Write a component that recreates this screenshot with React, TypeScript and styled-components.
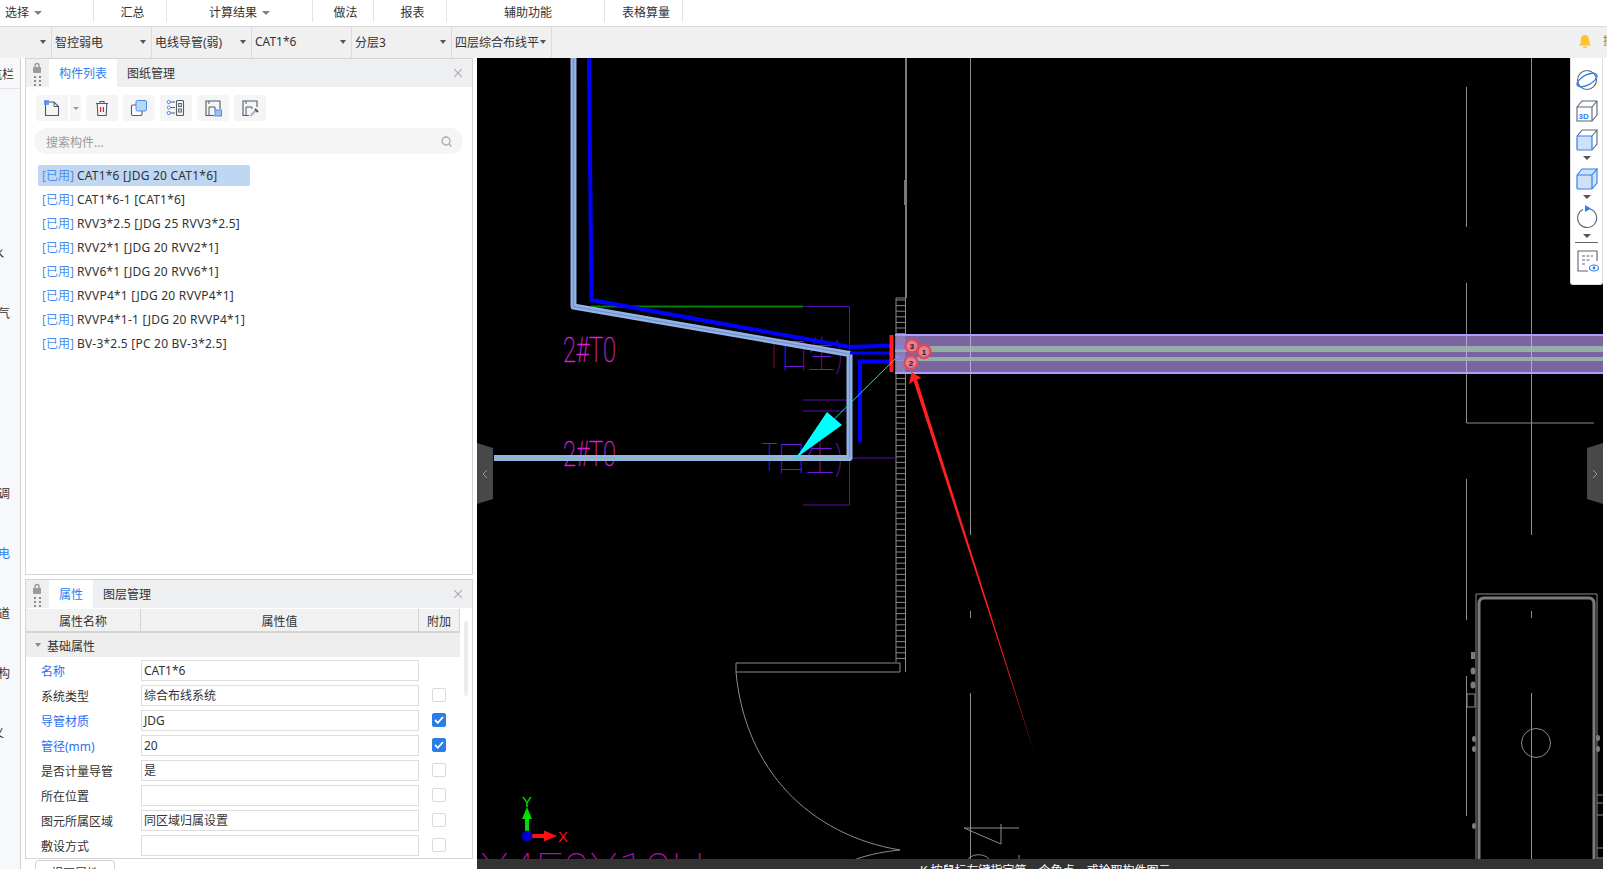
import React from 'react';
import styled, { createGlobalStyle } from 'styled-components';

const FONT = '"Noto Sans", "Noto Sans CJK SC", sans-serif';

const Global = createGlobalStyle`
  html, body { margin: 0; padding: 0; width: 100%; height: 100%; overflow: hidden; background: #fff; }
  body { font-family: ${FONT}; font-size: 12px; color: #333; }
  * { box-sizing: border-box; }
`;

const Page = styled.div`
  width: 1607px; height: 869px; display: flex; flex-direction: column; overflow: hidden; background: #fff;
`;

const MenuBar = styled.div`
  height: 27px; flex: none; display: flex; align-items: flex-start; background: #fff; border-bottom: 1px solid #d9d9d9;
`;
const MenuItem = styled.div<{ $w: number; $start?: boolean; $pad: number }>`
  width: ${p => p.$w}px; height: 22px; flex: none; display: flex; align-items: center; gap: 5px; padding: 4px 0 0 ${p => p.$pad}px;
  justify-content: ${p => (p.$start ? 'flex-start' : 'center')}; border-right: 1px solid #e3e3e3; line-height: 18px; white-space: nowrap;
`;
const MenuCaret = styled.i`
  width: 0; height: 0; border: 4px solid transparent; border-top: 4px solid #808080; border-bottom: 0; display: block;
`;

const SelectBar = styled.div`
  height: 31px; flex: none; display: flex; background: #f0f0f0; align-items: stretch;
`;
const SelectCell = styled.div<{ $w?: number }>`
  width: ${p => p.$w ?? 100}px; flex: none; display: flex; align-items: center; justify-content: space-between;
  padding: 0 5px 2px 3px; border-right: 1px solid #dcdcdc; white-space: nowrap;
`;
const SelectCaret = styled.i`
  width: 0; height: 0; border: 3px solid transparent; border-top: 4px solid #555; border-bottom: 0; display: block; flex: none;
`;
const SelectEnd = styled.div`
  flex: 1; display: flex; align-items: center; justify-content: flex-end; gap: 11px; overflow: hidden;
`;
const Bell = styled.svg`
  width: 14px; height: 15px; flex: none; margin-bottom: 3px;
`;
const CutChar = styled.span`
  color: #8a7a50; width: 4px; overflow: hidden; white-space: nowrap; font-size: 11px; line-height: 14px; margin-bottom: 3px;
`;

const Body = styled.div`
  flex: 1; display: flex; min-height: 0;
`;

const Rail = styled.div`
  width: 21px; flex: none; background: #f6f8fb; border-right: 1px solid #d2d2d2; overflow: hidden;
  display: flex; flex-direction: column; padding-top: 1px;
`;
const RailHead = styled.div`
  height: 30px; margin-bottom: 14px; flex: none; display: flex; justify-content: flex-end; align-items: center;
  padding-right: 6px; white-space: nowrap; border-bottom: 1px solid #e2e2e2; overflow: hidden;
`;
const RailRow = styled.div<{ $end: number; $on?: boolean }>`
  height: 60px; flex: none; display: flex; justify-content: flex-end; align-items: center; white-space: nowrap;
  padding-right: ${p => p.$end}px; color: ${p => (p.$on ? '#2d7fef' : '#333')};
`;

const Side = styled.div`
  width: 448px; margin-left: 4px; margin-right: 4px; flex: none; display: flex; flex-direction: column; gap: 4px; overflow: hidden;
`;
const Panel = styled.section<{ $h: number }>`
  height: ${p => p.$h}px; flex: none; border: 1px solid #d4d4d4; background: #fff; display: flex; flex-direction: column; overflow: hidden;
`;
const PanelHead = styled.header`
  height: 28px; flex: none; background: #eeeff1; display: flex; align-items: stretch; position: relative; padding-left: 23px;
`;
const Grip = styled.svg`
  position: absolute; left: 6px; top: 3px; width: 10px; height: 24px;
`;
const Tab = styled.div<{ $on?: boolean; $w: number }>`
  width: ${p => p.$w}px; flex: none; display: flex; align-items: center; justify-content: center; padding-bottom: 1px;
  background: ${p => (p.$on ? '#fff' : 'transparent')}; color: ${p => (p.$on ? '#2d7fef' : '#333')};
`;
const Close = styled.svg`
  position: absolute; right: 10px; top: 10px; width: 8px; height: 8px;
`;

const Tools = styled.div`
  height: 26px; flex: none; margin: 8px 0 0 10px; display: flex; gap: 5px;
`;
const ToolBtn = styled.div<{ $split?: boolean }>`
  width: 32px; height: 26px; flex: none; border-radius: ${p => (p.$split ? '3px 0 0 3px' : '3px')}; background: #f5f5f5;
  display: flex; align-items: center; justify-content: center;
  margin-right: ${p => (p.$split ? '-4px' : '0')};
`;
const ToolDrop = styled.div`
  width: 12px; height: 26px; flex: none; background: #f5f5f5; border-left: 1px solid #fff; border-radius: 0 3px 3px 0;
  display: flex; align-items: center; justify-content: center;
`;
const DropCaret = styled.i`
  width: 0; height: 0; border: 3px solid transparent; border-top: 3px solid #999; border-bottom: 0; display: block;
`;
const ToolIcon = styled.svg`
  width: 18px; height: 18px; overflow: visible;
`;

const Search = styled.div`
  height: 26px; flex: none; margin: 7px 9px 0 8px; background: #f5f5f5; border-radius: 13px; display: flex; align-items: center;
  justify-content: space-between; padding: 1px 11px 0 12px; color: #999;
`;
const SearchIcon = styled.svg`
  width: 11px; height: 11px;
`;

const List = styled.div`
  margin: 11px 0 0 12px; display: flex; flex-direction: column;
`;
const ListRow = styled.div`
  height: 24px; display: flex; align-items: flex-start;
`;
const ListLabel = styled.div<{ $on?: boolean }>`
  height: 21px; line-height: 21px; padding: 0 4px; border-radius: 2px; white-space: nowrap;
  background: ${p => (p.$on ? '#c0d7f1' : 'transparent')};
  width: ${p => (p.$on ? '212px' : 'auto')};
`;
const Used = styled.span`
  color: #4d8ded; margin-right: 3px;
`;
const ItemName = styled.span`
  letter-spacing: .22px;
`;

const TableWrap = styled.div`
  flex: 1; min-height: 0; position: relative; overflow: hidden;
`;
const ScrollThumb = styled.div`
  position: absolute; right: 4px; top: 13px; width: 4px; height: 75px; background: #ececec; border-radius: 2px;
`;
const Head = styled.div`
  display: grid; grid-template-columns: 115px 278px 41px; width: 434px; height: 24px; background: #f1f1f1; border-bottom: 2px solid #d4d4d4; margin-top: 1px;
`;
const HeadCell = styled.div`
  display: flex; align-items: center; justify-content: center; border-right: 1px solid #d4d4d4; padding-top: 2px;
`;
const Group = styled.div`
  width: 434px; height: 24px; background: #eeeeee; display: flex; align-items: center; padding: 1px 0 0 9px; gap: 6px;
`;
const GroupCaret = styled.i`
  width: 0; height: 0; border: 3px solid transparent; border-top: 4px solid #888; border-bottom: 0; display: block; margin-top: -2px;
`;
const PropRow = styled.div`
  display: grid; grid-template-columns: 115px 278px 41px; width: 434px; height: 25px; align-items: center;
  padding-top: 1px;
`;
const PropName = styled.div<{ $blue?: boolean }>`
  padding: 1px 0 0 15px; color: ${p => (p.$blue ? '#2d6ff0' : '#333')}; white-space: nowrap;
`;
const PropValue = styled.div`
  height: 21px; border: 1px solid #dddddd; padding-left: 2px; line-height: 20px; white-space: nowrap; background: #fff;
`;
const Check = styled.div<{ $on?: boolean }>`
  width: 14px; height: 14px; margin-left: 13px; border-radius: 2px; border: 1px solid ${p => (p.$on ? '#2b7de9' : '#dadada')};
  background: ${p => (p.$on ? '#2b7de9' : '#fff')}; display: flex; align-items: center; justify-content: center;
`;
const FootBtn = styled.div`
  width: 80px; height: 24px; margin-left: 10px; margin-top: -3px; flex: none; border: 1px solid #cfcfcf; border-radius: 4px; background: #fff;
  text-align: center; line-height: 26px; color: #333;
`;

const Canvas = styled.main`
  width: 1126px; flex: none; background: #000; position: relative; overflow: hidden;
`;
const Drawing = styled.svg`
  display: block; width: 1126px; height: 811px;
`;
const Handle = styled.div<{ $right?: boolean }>`
  position: absolute; top: 385px; ${p => (p.$right ? 'right: 0;' : 'left: 0;')} width: 16px; height: 61px; background: #484848;
  clip-path: ${p => (p.$right
    ? 'polygon(0 8%, 100% 0, 100% 100%, 0 92%)'
    : 'polygon(0 0, 100% 8%, 100% 92%, 0 100%)')};
  display: flex; align-items: center; justify-content: center;
`;
const Status = styled.div`
  position: absolute; left: 0; right: 0; bottom: 0; height: 10px; background: #333333; color: #fff; overflow: hidden;
  padding-left: 443px; line-height: 24px; white-space: nowrap; font-size: 12px;
`;
const ViewBox = styled.aside`
  position: absolute; right: 0; top: 0; width: 33px; height: 227px; background: #fff; border: 1px solid #dcdcdc; border-top: 0; border-radius: 0 0 3px 3px;
  display: flex; flex-direction: column; align-items: center;
`;
const ViewIcon = styled.svg<{ $mt: number }>`
  width: 24px; height: 24px; margin-top: ${p => p.$mt}px; flex: none; overflow: visible;
`;
const ViewCaret = styled.i`
  width: 0; height: 0; border: 4px solid transparent; border-top: 4px solid #555; border-bottom: 0; display: block; margin-top: 5px; flex: none;
`;
const ViewRule = styled.div`
  width: 23px; height: 1px; background: #666; margin-top: 4px; flex: none;
`;

const menu: { t: string; w: number; caret?: boolean; start?: boolean; pad: number }[] = [
  { t: '选择', w: 94, caret: true, start: true, pad: 5 },
  { t: '汇总', w: 73, pad: 5 },
  { t: '计算结果', w: 146, caret: true, pad: 0 },
  { t: '做法', w: 61, pad: 5 },
  { t: '报表', w: 73, pad: 5 },
  { t: '辅助功能', w: 158, pad: 5 },
  { t: '表格算量', w: 78, pad: 5 },
];
const selects = ['智控弱电', '电线导管(弱)', 'CAT1*6', '分层3', '四层综合布线平'];
const items = ['CAT1*6 [JDG 20 CAT1*6]', 'CAT1*6-1 [CAT1*6]', 'RVV3*2.5 [JDG 25 RVV3*2.5]', 'RVV2*1 [JDG 20 RVV2*1]', 'RVV6*1 [JDG 20 RVV6*1]', 'RVVP4*1 [JDG 20 RVVP4*1]', 'RVVP4*1-1 [JDG 20 RVVP4*1]', 'BV-3*2.5 [PC 20 BV-3*2.5]'];
const props: { n: string; v: string; blue?: boolean; c?: boolean; none?: boolean }[] = [
  { n: '名称', v: 'CAT1*6', blue: true, none: true },
  { n: '系统类型', v: '综合布线系统' },
  { n: '导管材质', v: 'JDG', blue: true, c: true },
  { n: '管径(mm)', v: '20', blue: true, c: true },
  { n: '是否计量导管', v: '是' },
  { n: '所在位置', v: '' },
  { n: '图元所属区域', v: '同区域归属设置' },
  { n: '敷设方式', v: '' },
];
const rail: { t: string; end: number; on?: boolean }[] = [
  { t: '', end: 0 }, { t: '', end: 0 }, { t: '给排水', end: 16 }, { t: '电气', end: 10 }, { t: '', end: 0 }, { t: '', end: 0 },
  { t: '暖通空调', end: 10 }, { t: '智控弱电', end: 10, on: true }, { t: '管道', end: 10 }, { t: '结构', end: 10 }, { t: '定义', end: 16 },
];

const PanelGrip = () => (
  <Grip viewBox="0 0 10 24">
    <path d="M3 5V3.5a2 2 0 0 1 4 0V5" fill="none" stroke="#9a9a9a" strokeWidth="1.4" />
    <rect x="1" y="5" width="8" height="6" rx="1" fill="#9a9a9a" />
    {[14, 18, 22].map(y => [2, 7].map(x => <rect key={`${x}${y}`} x={x} y={y} width="2" height="2" fill="#8a8a8a" />))}
  </Grip>
);
const X = () => (
  <Close viewBox="0 0 8 8"><path d="M0 0L8 8M8 0L0 8" stroke="#aaa" strokeWidth="1.1" /></Close>
);

const S = '#4f5a6b';
const B = '#4d8ded';
const icons = [
  <><path d="M2.5 3H11l4.5 4.5V16.5H2.5Z" fill="none" stroke={S} strokeWidth="1.1" /><path d="M11 3v4.5h4.5" fill="none" stroke={S} strokeWidth="1" /><rect x="1" y="1" width="5" height="5" fill={B} opacity=".8" /></>,
  <><path d="M3 4.5H15M7 4.5V2.5H11V4.5M4.2 4.5L4.8 16.5H13.2L13.8 4.5" fill="none" stroke={S} strokeWidth="1.1" /><path d="M7.6 8V13M10.4 8V13" stroke="#e02020" strokeWidth="1.2" /></>,
  <><rect x="1.5" y="6" width="10.5" height="10.5" rx="1.5" fill="#fff" stroke={S} strokeWidth="1.1" /><rect x="6" y="1.5" width="10.5" height="10.5" rx="1.5" fill="#bcd4f4" stroke={B} strokeWidth="1" /></>,
  <><rect x="9.5" y="1.5" width="7" height="15" rx="1" fill="none" stroke={S} strokeWidth="1.1" /><rect x="11.7" y="4.5" width="2.6" height="3" fill="none" stroke={S} /><rect x="11.7" y="10" width="2.6" height="3" fill="none" stroke={S} /><path d="M1 3H8M1 8.5H8M1 14H8" stroke={S} /><circle cx="1.8" cy="3" r="1.6" fill="#fff" stroke={B} /><circle cx="1.8" cy="8.5" r="1.6" fill="#fff" stroke={B} /><circle cx="1.8" cy="14" r="1.6" fill="#fff" stroke={B} /></>,
  <><path d="M16 10V2H2V16.5H10" fill="none" stroke={S} strokeWidth="1.1" /><path d="M5 16V8H11V11M5 2V5" fill="none" stroke={S} /><rect x="11" y="11" width="6.5" height="6" fill="#9dc0f2" stroke={B} /></>,
  <><path d="M16 8V2H2V16.5H8" fill="none" stroke={S} strokeWidth="1.1" /><path d="M5 16V8H11V10M5 2V5" fill="none" stroke={S} /><path d="M9.5 17L15 11" stroke="#a8b4c4" strokeWidth="2" /><path d="M14 10L17 13" stroke="#555" strokeWidth="2" /></>,
];

const Ladder = () => {
  const rungs: React.ReactElement[] = [];
  for (let y = 300; y < 664; y += 5.6) {
    rungs.push(<path key={y} d={`M896 ${y}H905`} />);
  }
  return (
    <g stroke="#8a8a8a" strokeWidth="1" fill="none">
      <path d="M896 298V662M905.5 298V672M896 298H905.5" />
      {rungs}
    </g>
  );
};

export default function App() {
  return (
    <Page>
      <Global />
      <MenuBar>
        {menu.map(m => (
          <MenuItem key={m.t} $w={m.w} $start={m.start} $pad={m.pad}>{m.t}{m.caret && <MenuCaret />}</MenuItem>
        ))}
      </MenuBar>
      <SelectBar>
        <SelectCell $w={52}><span /><SelectCaret /></SelectCell>
        {selects.map(s => <SelectCell key={s}>{s}<SelectCaret /></SelectCell>)}
        <SelectEnd>
          <Bell viewBox="0 0 14 15"><path d="M7 1C4 1 3 3.5 3 6C3 9 2 10 1 11.5H13C12 10 11 9 11 6C11 3.5 10 1 7 1Z" fill="#fcc22f" /><path d="M5 12.5H9C9 14.5 5 14.5 5 12.5Z" fill="#fcc22f" /></Bell>
          <CutChar>搜索</CutChar>
        </SelectEnd>
      </SelectBar>
      <Body>
        <Rail>
          <RailHead>导航栏</RailHead>
          {rail.map((r, i) => <RailRow key={i} $end={r.end} $on={r.on}>{r.t}</RailRow>)}
        </Rail>
        <Side>
          <Panel $h={517}>
            <PanelHead>
              <PanelGrip />
              <Tab $on $w={68}>构件列表</Tab>
              <Tab $w={68}>图纸管理</Tab>
              <X />
            </PanelHead>
            <Tools>
              <ToolBtn $split><ToolIcon viewBox="0 0 18 18">{icons[0]}</ToolIcon></ToolBtn>
              <ToolDrop><DropCaret /></ToolDrop>
              {icons.slice(1).map((ic, i) => <ToolBtn key={i}><ToolIcon viewBox="0 0 18 18">{ic}</ToolIcon></ToolBtn>)}
            </Tools>
            <Search>
              搜索构件...
              <SearchIcon viewBox="0 0 11 11"><circle cx="5" cy="5" r="4" fill="none" stroke="#aaa" strokeWidth="1.3" /><path d="M8 8L10.5 10.5" stroke="#aaa" strokeWidth="1.3" /></SearchIcon>
            </Search>
            <List>
              {items.map((t, i) => (
                <ListRow key={t}><ListLabel $on={i === 0}><Used>[已用]</Used><ItemName>{t}</ItemName></ListLabel></ListRow>
              ))}
            </List>
          </Panel>
          <Panel $h={280}>
            <PanelHead>
              <PanelGrip />
              <Tab $on $w={44}>属性</Tab>
              <Tab $w={68}>图层管理</Tab>
              <X />
            </PanelHead>
            <TableWrap>
              <ScrollThumb />
              <Head>
                <HeadCell>属性名称</HeadCell>
                <HeadCell>属性值</HeadCell>
                <HeadCell>附加</HeadCell>
              </Head>
              <Group><GroupCaret />基础属性</Group>
              {props.map(p => (
                <PropRow key={p.n}>
                  <PropName $blue={p.blue}>{p.n}</PropName>
                  <PropValue>{p.v}</PropValue>
                  {p.none ? <span /> : (
                    <Check $on={p.c}>
                      {p.c && <svg width="10" height="8" viewBox="0 0 10 8"><path d="M1 4L3.8 6.8L9 1" fill="none" stroke="#fff" strokeWidth="1.8" /></svg>}
                    </Check>
                  )}
                </PropRow>
              ))}
            </TableWrap>
          </Panel>
          <FootBtn>视图属性</FootBtn>
        </Side>
        <Canvas>
          <Drawing viewBox="477 58 1126 811">
            <g stroke="#8c8c8c" strokeWidth="1" fill="none">
              <path d="M970.5 58V535M970.5 611V618M970.5 693V869" />
              <path d="M1531.5 58V535M1531.5 611V618M1531.5 693V869" />
              <path d="M1466.5 87V227M1466.5 283V423H1594M1466.5 479V620M1466.5 676V816" />
              <path d="M736 663H900V672H736ZM736 672C745 770 810 835 900 850M900 850C870 853 850 860 835 869" />
              <path d="M964 828H1019M964 828L1001 844V824M964 869C964 850 993 850 993 869M1019 855V869" />
              <path d="M1476 594H1597V869M1476 594V869" />
              <ellipse cx="1536" cy="743" rx="14.5" ry="14.5" />
              <path d="M1467 694H1475V707H1467Z" />
              <path d="M1597 795H1603M1597 803H1603M1597 815H1603M1597 848H1603M1597 858H1603" />
            </g>
            <path d="M1479 869V604Q1479 598 1484 598H1589Q1594 598 1594 604V869" fill="none" stroke="#7c7c7c" strokeWidth="3" />
            <g fill="#7c7c7c">
              <rect x="1471" y="652" width="4" height="7" />
              <ellipse cx="1473" cy="671" rx="2.5" ry="3.5" />
              <ellipse cx="1473" cy="685" rx="2.5" ry="3.5" />
              <ellipse cx="1474" cy="739" rx="2" ry="3" />
              <ellipse cx="1474" cy="749" rx="2" ry="3" />
              <ellipse cx="1474" cy="826" rx="2" ry="3" />
              <ellipse cx="1598" cy="738" rx="2" ry="3" />
              <ellipse cx="1598" cy="749" rx="2" ry="3" />
            </g>
            <path d="M906 58V298" stroke="#7a7a7a" strokeWidth="2" fill="none" />
            <path d="M904.5 180V205" stroke="#777" strokeWidth="1" fill="none" />
            <Ladder />

            <g fontFamily='Roboto, "Liberation Sans", sans-serif' fontWeight="100">
              <text x="563" y="362" fontSize="35" fill="#d820d8" stroke="#d820d8" strokeWidth=".4" textLength="53" lengthAdjust="spacingAndGlyphs">2#T0</text>
              <text x="563" y="466" fontSize="35" fill="#d820d8" stroke="#d820d8" strokeWidth=".4" textLength="53" lengthAdjust="spacingAndGlyphs">2#T0</text>
              <text x="767" y="368" fontSize="38" fill="#7416d8" textLength="75" lengthAdjust="spacingAndGlyphs" fontFamily={FONT}>T口生)</text>
              <text x="762" y="471" fontSize="38" fill="#7416d8" textLength="80" lengthAdjust="spacingAndGlyphs" fontFamily={FONT}>T口生)</text>
              <text x="480" y="886" fontSize="46" fill="#b010b0" textLength="225" lengthAdjust="spacingAndGlyphs">X4F0X10H</text>
            </g>

            <g stroke="#5510a8" strokeWidth="1" fill="none">
              <path d="M803 306.5H849.5V505H803M803 400H849M803 411H849M851 458H896" />
            </g>
            <path d="M591 306.5H803" stroke="#008000" strokeWidth="2" fill="none" />

            <path d="M573.5 58V306.5L849.5 354V458H494" fill="none" stroke="#93b2e8" strokeWidth="6" strokeLinejoin="round" />
            <path d="M573.5 58V306.5L849.5 354V458H494" fill="none" stroke="#6e92cc" strokeWidth="1.2" />
            <path d="M849.5 458H494" fill="none" stroke="#90c0a8" strokeWidth="1.5" />
            <path d="M589 58L591.5 300L850 347L892 345.5" fill="none" stroke="#0000ff" strokeWidth="4" />
            <path d="M850 353H892" fill="none" stroke="#0000ff" strokeWidth="3" />
            <path d="M860 441V361.5H892" fill="none" stroke="#0000ff" strokeWidth="4" strokeLinecap="round" />

            <rect x="895" y="334.5" width="708" height="38" fill="#7a65a0" />
            <path d="M895 335H1603M895 373H1603" stroke="#b09cff" strokeWidth="2" fill="none" />
            <rect x="895" y="346" width="708" height="6" fill="#96aea8" />
            <rect x="895" y="357" width="708" height="4" fill="#96aea8" />
            <path d="M970.5 335V373M1466.5 335V373M1531.5 335V373" stroke="#b8a8d8" strokeWidth="1" />
            <path d="M895 347H915M895 358H915" stroke="#6a6cf0" strokeWidth="5" />
            <rect x="896" y="335" width="9.5" height="38" fill="#a098c8" opacity=".45" />
            <rect x="889.5" y="335" width="4" height="37" fill="#ff2020" />

            <path d="M898 356L793 460" stroke="#10e0e0" strokeWidth="1" />
            <path d="M796 458L827 412L842 425Z" fill="#00ffff" />

            <g fontFamily='"Liberation Sans", sans-serif' fontSize="8" fontWeight="700" textAnchor="middle" fill="#301018">
              <circle cx="924" cy="351.5" r="6.5" fill="#e88090" stroke="#d84c60" strokeWidth="2.4" />
              <text x="924" y="354.5">1</text>
              <circle cx="912" cy="346" r="6.5" fill="#e88090" stroke="#d84c60" strokeWidth="2.4" />
              <text x="912" y="349">3</text>
              <circle cx="911" cy="362.5" r="6.5" fill="#e88090" stroke="#d84c60" strokeWidth="2.4" />
              <text x="911" y="365.5">2</text>
            </g>

            <path d="M911.5 372L921.5 378L917 379.5L1036 758L913.5 381L909 384Z" fill="#ff2020" />

            <path d="M527 836V817" stroke="#00e000" strokeWidth="4" />
            <path d="M527 807L532 819H522Z" fill="#00e000" />
            <path d="M527 836H545" stroke="#ff1010" strokeWidth="4" />
            <path d="M557 836L544 830.5V841.5Z" fill="#ff1010" />
            <ellipse cx="527" cy="836" rx="5.5" ry="5.5" fill="#0000c8" />
            <text x="522" y="807" fontSize="14" fill="#00e000" fontFamily='"Liberation Sans", sans-serif' textLength="10" lengthAdjust="spacingAndGlyphs">Y</text>
            <text x="558" y="842" fontSize="14" fill="#ff1010" fontFamily='"Liberation Sans", sans-serif' textLength="10" lengthAdjust="spacingAndGlyphs">X</text>
          </Drawing>

          <Handle>
            <svg width="6" height="10" viewBox="0 0 6 10"><path d="M5 1L1 5L5 9" fill="none" stroke="#999" strokeWidth="1" /></svg>
          </Handle>
          <Handle $right>
            <svg width="6" height="10" viewBox="0 0 6 10"><path d="M1 1L5 5L1 9" fill="none" stroke="#999" strokeWidth="1" /></svg>
          </Handle>

          <ViewBox>
            <ViewIcon $mt={10} viewBox="0 0 24 24">
              <circle cx="12" cy="12" r="9.5" fill="none" stroke="#5a6478" strokeWidth="1.1" />
              <ellipse cx="12" cy="12" rx="11" ry="5" transform="rotate(-28 12 12)" fill="none" stroke="#2f80ed" strokeWidth="1.3" />
            </ViewIcon>
            <ViewIcon $mt={6} viewBox="0 0 24 24">
              <path d="M2 9H17V23H2ZM2 9L7 3H22V17L17 23M17 9L22 3" fill="none" stroke="#5a6478" strokeWidth="1.1" />
              <text x="3.5" y="20.5" fontSize="8" fontWeight="700" fill="#2f80ed" fontFamily='"Liberation Sans", sans-serif'>3D</text>
            </ViewIcon>
            <ViewIcon $mt={5} viewBox="0 0 24 24">
              <path d="M7 3H22V17L17 23M17 9L22 3M2 9L7 3" fill="none" stroke="#5a6478" strokeWidth="1.1" />
              <rect x="2" y="9" width="15" height="14" rx="1" fill="#cfe1f9" stroke="#2f80ed" strokeWidth="1.2" />
            </ViewIcon>
            <ViewCaret />
            <ViewIcon $mt={6} viewBox="0 0 24 24">
              <path d="M2 9L7 3H22L17 9M17 9L22 3V17L17 23" fill="#cfe1f9" stroke="#2f80ed" strokeWidth="1.1" />
              <rect x="2" y="9" width="15" height="14" rx="1" fill="#cfe1f9" stroke="#2f80ed" strokeWidth="1.2" />
            </ViewIcon>
            <ViewCaret />
            <ViewIcon $mt={6} viewBox="0 0 24 24">
              <path d="M8 4.5A9.5 9.5 0 1 0 15 4" fill="none" stroke="#5a6478" strokeWidth="1.1" />
              <path d="M10 0L16 3.5L10 7Z" fill="#2f80ed" />
            </ViewIcon>
            <ViewCaret />
            <ViewRule />
            <ViewIcon $mt={5} viewBox="0 0 24 24">
              <path d="M22 13V3H3V23H13" fill="none" stroke="#5a6478" strokeWidth="1.1" />
              <path d="M7 8H18M7 12H15M7 16H11" stroke="#5a6478" strokeWidth="1.1" strokeDasharray="3 1.5" />
              <ellipse cx="19" cy="20" rx="4.5" ry="3" fill="#fff" stroke="#2f80ed" strokeWidth="1.2" />
              <circle cx="19" cy="20" r="1.4" fill="#2f80ed" />
            </ViewIcon>
          </ViewBox>

          <Status>K 按鼠标左键指定第一个角点，或拾取构件图元</Status>
        </Canvas>
      </Body>
    </Page>
  );
}
